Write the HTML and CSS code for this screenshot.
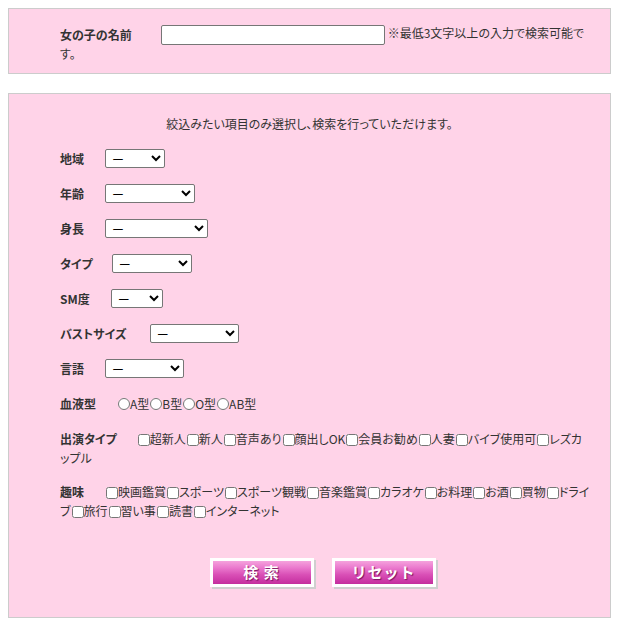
FILE: index.html
```html
<!DOCTYPE html>
<html lang="ja">
<head>
<meta charset="utf-8">
<title>検索</title>
<link rel="stylesheet" href="styles.css">
</head>
<body>
<div class="box name-box"><span class="name-label">女の子の名前</span><input class="name-input" type="text"> ※最低3文字以上の入力で検索可能です。</div>

<div class="box search-box">
  <p class="intro">絞込みたい項目のみ選択し、検索を行っていただけます。</p>
  <div class="rows">
    <div class="row single"><span class="lbl">地域</span><select class="sel w-area"><option>ー</option></select></div>
    <div class="row single"><span class="lbl">年齢</span><select class="sel w-age"><option>ー</option></select></div>
    <div class="row single"><span class="lbl">身長</span><select class="sel w-height"><option>ー</option></select></div>
    <div class="row single"><span class="lbl lbl-type">タイプ</span><select class="sel w-type"><option>ー</option></select></div>
    <div class="row single"><span class="lbl">SM度</span><select class="sel w-sm"><option>ー</option></select></div>
    <div class="row single"><span class="lbl lbl-bust">バストサイズ</span><select class="sel w-bust"><option>ー</option></select></div>
    <div class="row single"><span class="lbl">言語</span><select class="sel w-lang"><option>ー</option></select></div>
    <div class="row single"><span class="lbl">血液型</span><input class="rd" type="radio" name="blood"><span>A型</span><input class="rd" type="radio" name="blood"><span>B型</span><input class="rd" type="radio" name="blood"><span>O型</span><input class="rd" type="radio" name="blood"><span>AB型</span></div>
    <div class="row multi"><span class="lbl lbl-cast">出演タイプ</span><input class="cb" type="checkbox">超新人<input class="cb" type="checkbox">新人<input class="cb" type="checkbox">音声あり<input class="cb" type="checkbox">顔出しOK<input class="cb" type="checkbox">会員お勧め<input class="cb" type="checkbox">人妻<input class="cb" type="checkbox">バイブ使用可<input class="cb" type="checkbox">レズカップル</div>
    <div class="row multi"><span class="lbl">趣味</span><input class="cb" type="checkbox">映画鑑賞<input class="cb" type="checkbox">スポーツ<input class="cb" type="checkbox">スポーツ観戦<input class="cb" type="checkbox">音楽鑑賞<input class="cb" type="checkbox">カラオケ<input class="cb" type="checkbox">お料理<input class="cb" type="checkbox">お酒<input class="cb" type="checkbox">買物<input class="cb" type="checkbox">ドライブ<input class="cb" type="checkbox">旅行<input class="cb" type="checkbox">習い事<input class="cb" type="checkbox">読書<input class="cb" type="checkbox">インターネット</div>
    <div class="buttons">
      <button class="btn" type="submit">検&nbsp;索</button>
      <button class="btn" type="reset">リセット</button>
    </div>
  </div>
</div>
</body>
</html>
```

FILE: styles.css
```css
body {
  margin: 8px;
  font-family: "Noto Sans CJK JP", "Noto Sans", sans-serif;
  font-size: 12px;
  color: #333;
  background: #fff;
  font-feature-settings: "palt";
}

.box {
  background: #ffd3e8;
  border: 1px solid #ccc;
}

.name-box {
  padding: 15px 20px 10px 51px;
  line-height: 18px;
}

.name-label {
  display: inline-block;
  width: 101px;
  font-weight: bold;
  vertical-align: middle;
}

.name-input {
  width: 224px;
  height: 20px;
  box-sizing: border-box;
  margin: 0;
  padding: 1px 3px;
  border: 1px solid #767676;
  border-radius: 2px;
  background: #fff;
  vertical-align: middle;
}

.search-box {
  margin-top: 19px;
  padding: 20px 0 28px;
}

.intro {
  margin: 0 0 15px;
  line-height: 20px;
  text-align: center;
}

.rows {
  padding: 0 19px 0 51px;
}

.row {
  margin-bottom: 15px;
}

.row.single {
  display: flex;
  align-items: center;
  height: 20px;
  line-height: 20px;
}

.row.multi {
  line-height: 19px;
  height: 38px;
}

.lbl {
  font-weight: bold;
  margin-right: 21px;
}

.lbl-type {
  margin-right: 19px;
}

.lbl-bust {
  margin-right: 23px;
}

.lbl-cast {
  margin-right: 20px;
}

.sel {
  height: 19px;
  box-sizing: border-box;
  margin: 0;
  padding: 0 0 0 2px;
  font-family: "Noto Sans CJK JP", sans-serif;
  font-size: 12px;
  color: #000;
  border: 1px solid #767676;
  border-radius: 2px;
  background-color: #fff;
}

.w-area { width: 60px; }
.w-age { width: 90px; }
.w-height { width: 103px; }
.w-type { width: 80px; }
.w-sm { width: 52px; }
.w-bust { width: 89px; }
.w-lang { width: 79px; }

.rd,
.cb {
  width: 12px;
  height: 12px;
  margin: 0 0 0 1px;
}

.rd {
  flex: none;
}

.cb {
  vertical-align: -2px;
}

.buttons {
  display: flex;
  justify-content: center;
  gap: 18px;
  margin-top: 38px;
  padding-right: 6px;
  height: 31px;
}

.btn {
  width: 104px;
  height: 29px;
  box-sizing: border-box;
  margin: 0;
  padding: 0;
  border: 3px solid #fff;
  box-shadow: 2px 2px 0 #cfcfcf;
  background: linear-gradient(#f5a2dd 0%, #ea78cd 30%, #d94fb6 60%, #c42e9e 100%);
  color: #fff;
  font-family: "Noto Sans CJK JP", sans-serif;
  font-size: 15px;
  font-weight: bold;
  line-height: 22px;
  letter-spacing: 1px;
  text-shadow: 1px 1px 1px #7a1460;
  cursor: pointer;
}
```
